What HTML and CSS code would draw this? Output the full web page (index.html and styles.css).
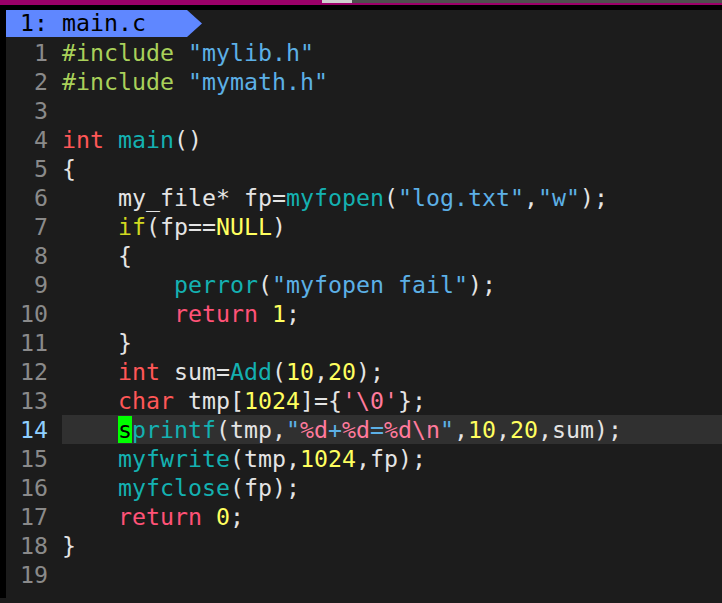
FILE: index.html
```html
<!DOCTYPE html>
<html>
<head>
<meta charset="utf-8">
<link rel="stylesheet" href="styles.css">
</head>
<body>
<div class="topbar"><div class="tb-left"></div><div class="tb-right"><div class="tb-thumb"></div><div class="tb-track"></div></div></div>
<div class="frame">
  <div class="tabrow"><div class="tab">1: main.c</div></div>
  <div class="editor">
    <div class="line"><span class="ln">1</span><span class="code"><span class="pp">#include</span> <span class="str">"mylib.h"</span></span></div>
    <div class="line"><span class="ln">2</span><span class="code"><span class="pp">#include</span> <span class="str">"mymath.h"</span></span></div>
    <div class="line"><span class="ln">3</span><span class="code"></span></div>
    <div class="line"><span class="ln">4</span><span class="code"><span class="kw">int</span> <span class="fn">main</span>()</span></div>
    <div class="line"><span class="ln">5</span><span class="code">{</span></div>
    <div class="line"><span class="ln">6</span><span class="code">    my_file* fp=<span class="fn">myfopen</span>(<span class="str">"log.txt"</span>,<span class="str">"w"</span>);</span></div>
    <div class="line"><span class="ln">7</span><span class="code">    <span class="cond">if</span>(fp==<span class="cst">NULL</span>)</span></div>
    <div class="line"><span class="ln">8</span><span class="code">    {</span></div>
    <div class="line"><span class="ln">9</span><span class="code">        <span class="fn">perror</span>(<span class="str">"myfopen fail"</span>);</span></div>
    <div class="line"><span class="ln">10</span><span class="code">        <span class="ret">return</span> <span class="num">1</span>;</span></div>
    <div class="line"><span class="ln">11</span><span class="code">    }</span></div>
    <div class="line"><span class="ln">12</span><span class="code">    <span class="kw">int</span> sum=<span class="fn">Add</span>(<span class="num">10</span>,<span class="num">20</span>);</span></div>
    <div class="line"><span class="ln">13</span><span class="code">    <span class="kw">char</span> tmp[<span class="num">1024</span>]={<span class="chr">'\0'</span>};</span></div>
    <div class="line cur"><span class="ln">14</span><span class="code">    <span class="cursor">s</span><span class="fn">printf</span>(tmp,<span class="str">"</span><span class="chr">%d</span><span class="str">+</span><span class="chr">%d</span><span class="str">=</span><span class="chr">%d\n</span><span class="str">"</span>,<span class="num">10</span>,<span class="num">20</span>,sum);</span></div>
    <div class="line"><span class="ln">15</span><span class="code">    <span class="fn">myfwrite</span>(tmp,<span class="num">1024</span>,fp);</span></div>
    <div class="line"><span class="ln">16</span><span class="code">    <span class="fn">myfclose</span>(fp);</span></div>
    <div class="line"><span class="ln">17</span><span class="code">    <span class="ret">return</span> <span class="num">0</span>;</span></div>
    <div class="line"><span class="ln">18</span><span class="code">}</span></div>
    <div class="line"><span class="ln">19</span><span class="code"></span></div>
  </div>
</div>
</body>
</html>
```
FILE: styles.css
```css
html, body {
  margin: 0;
  padding: 0;
  background: #1c1c1c;
  overflow: hidden;
}
body {
  font-family: "DejaVu Sans Mono", monospace;
  font-size: 23.25px;
  color: #e4e4e4;
}
.topbar {
  display: flex;
  height: 5px;
  background: #9b0068;
}
.tb-left {
  width: 322px;
}
.tb-right {
  flex: 1;
  display: flex;
  height: 3px;
}
.tb-thumb {
  width: 30px;
  background: #cfcfcf;
}
.tb-track {
  flex: 1;
  background: #4e4e4e;
}
.frame {
  border-top: 5px solid #000;
  border-left: 6px solid #000;
  height: 593px;
  box-sizing: border-box;
  background: #1c1c1c;
}
.tabrow {
  height: 28px;
}
.tab {
  width: 196px;
  height: 27px;
  box-sizing: border-box;
  padding-left: 14px;
  line-height: 25px;
  background: #5f87ff;
  color: #000;
  white-space: pre;
  clip-path: polygon(0 0, 181px 0, 196px 50%, 181px 100%, 0 100%);
}
.line {
  display: flex;
  height: 29px;
  line-height: 29px;
  white-space: pre;
}
.ln {
  width: 42px;
  margin-right: 14px;
  text-align: right;
  color: #8a8a8a;
}
.code {
  flex: 1;
}
.cur .code {
  background: #303030;
}
.cur .ln {
  color: #8fcfff;
}
.pp { color: #a9d15a; }
.str { color: #5cb0e6; }
.kw { color: #ff5757; }
.ret { color: #ff5277; }
.fn { color: #14b1b1; }
.cond { color: #d0d820; }
.cst { color: #ffff5f; }
.num { color: #ffff5f; }
.chr { color: #ff7a9c; }
.cursor {
  background: #00ff00;
  color: #000;
}
```
